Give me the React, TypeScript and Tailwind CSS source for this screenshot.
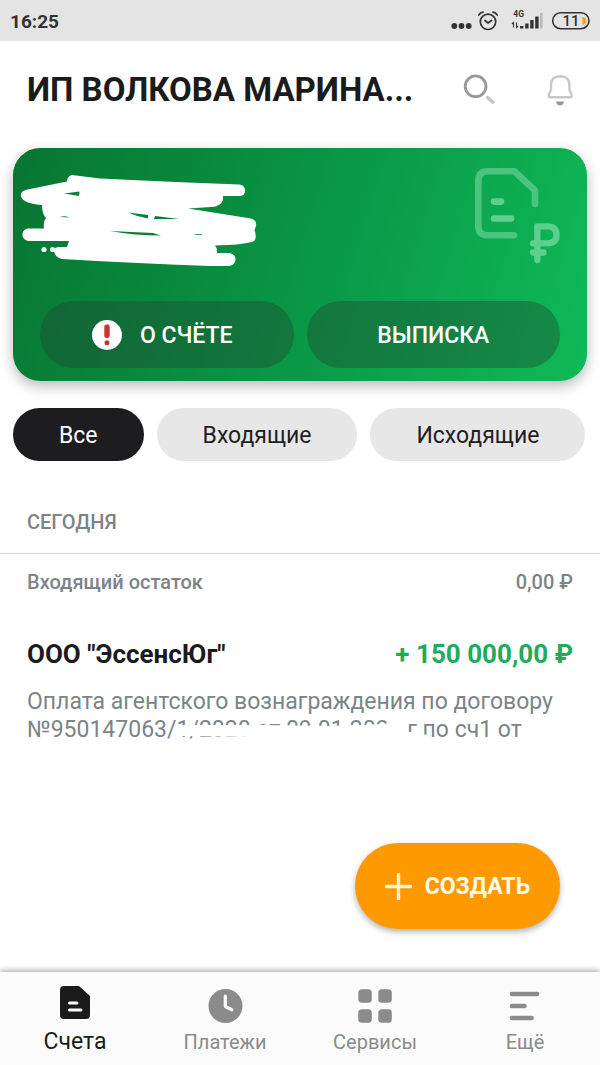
import type { ReactNode } from "react";

function StatusBar() {
  return (
    <div className="flex h-[41px] items-center justify-between bg-[#e4e4e4] px-[10px] text-[#333333]">
      <span className="pt-[2px] text-[19px] leading-6 font-bold">16:25</span>
      <svg className="h-[41px] w-[140px]" viewBox="450 0 140 41" fill="none" aria-hidden="true">
        <g fill="#333">
          <circle cx="454.300" cy="26" r="2.900" />
          <circle cx="461.500" cy="26" r="2.900" />
          <circle cx="468.700" cy="26" r="2.900" />
        </g>
        <g stroke="#333" strokeWidth="1.700" strokeLinecap="round" strokeLinejoin="round">
          <circle cx="488" cy="21.800" r="7.700" />
          <path d="M485 20.500l3 2.500 3.500-2.500M478.800 15q1.500-2.300 4.200-2.800M497.200 15q-1.500-2.300-4.200-2.800" />
        </g>
        <text x="513.300" y="17" fontSize="8.500" fontWeight="700" fill="#333">4G</text>
        <path d="M513.500 27.500v-5l-1.500 1.500M516.500 22.500v5l1.500-1.500" stroke="#333" strokeWidth="1.100" />
        <g fill="#333">
          <rect x="520" y="26" width="3.400" height="2.500" />
          <rect x="525.200" y="23.500" width="3.400" height="5" />
          <rect x="530.200" y="20" width="3.400" height="8.500" />
          <rect x="535.200" y="16.500" width="3.400" height="12" />
        </g>
        <rect x="540" y="13" width="2.600" height="15.500" fill="#bbb" />
        <rect x="552.700" y="12.700" width="36.300" height="16" rx="8" stroke="#333" strokeWidth="1.600" />
        <path d="M582.300 17q4.200 0 4.200 3.900t-4.200 3.900z" fill="#f5a623" />
        <text x="571" y="26" fontSize="15" fontWeight="500" textAnchor="middle" fill="#333">11</text>
      </svg>
    </div>
  );
}

function Header() {
  return (
    <header className="flex h-[107px] items-center pb-[10px] pl-[27px]">
      <h1 className="min-w-0 flex-1 text-[33px] leading-10 font-bold whitespace-nowrap text-[#1b1b1b]">
        ИП ВОЛКОВА МАРИНА...
      </h1>
      <div className="flex gap-10 pr-5">
        <button aria-label="Поиск" className="size-10">
          <svg viewBox="460 67 40 40" fill="none" className="size-10">
            <circle cx="475.600" cy="83.300" r="10.400" stroke="#999" strokeWidth="2.800" />
            <path d="M487.500 94.500l5.500 4.700" stroke="#c2c2c2" strokeWidth="3.200" strokeLinecap="round" />
          </svg>
        </button>
        <button aria-label="Уведомления" className="size-10">
          <svg viewBox="540 69 40 40" fill="none" className="size-10">
            <path d="M551 88v-4.500c0-5 3.300-8.300 9.200-8.300s9.200 3.300 9.200 8.300v4.500c0 2.500 2.300 4 2.300 6.500 0 1.200-.7 1.700-1.700 1.700h-19.600c-1 0-1.700-.5-1.700-1.700 0-2.500 2.300-4 2.300-6.500z" stroke="#c8c8c8" strokeWidth="2.400" />
            <path d="M556 100.500h8q-.5 4-4 4t-4-4z" fill="#999" />
          </svg>
        </button>
      </div>
    </header>
  );
}

function AccountCard() {
  return (
    <section className="mx-[13px] rounded-[27px] bg-[linear-gradient(107deg,#087532_0%,#099444_48%,#0fba58_100%)] px-[27px] pb-[13px] shadow-[0_5px_14px_rgba(0,0,0,0.28)]">
      <div className="flex h-[153px] items-start justify-between">
        <svg className="-ml-5 h-[140px] w-[250px]" viewBox="20 148 250 140" fill="none" aria-hidden="true">
          <path
            fill="#fff"
            d="M72 175L100 178.500Q170 182 239 184.500Q245 185 245 190.500T239 196H223Q224 206 211 207L188 208.500L251 218.500Q257 220 256 226L254.500 230Q258 240 252 242Q240 245 215 245.500L217 249V253H230Q236 255 235.500 260T229 266H210Q130 263 62 259Q54 257 54 250Q55 247 59 247H67L69 241H28Q22 239 22.500 234T28 228.500H44Q43 221 46 218Q42 214 42 205Q30 204 25 201Q20 198 21 193.500Q22 190 30 189L67 181.500Q67 176 72 175Z"
          />
          <path
            fill="#0a7f39"
            d="M64 193.500L79.500 191.500L79 196ZM128 212.500L148 215V218.500Q138 217 128 212.500ZM155 216L179 219H154ZM110 231L153 233L161 235.500Q135 235.500 110 231ZM60 217Q65 215.500 69 217.500ZM194 234.300H202V235H196Z"
          />
          <circle cx="44" cy="249.500" r="2.600" fill="#fff" />
          <circle cx="52.500" cy="249.500" r="2.600" fill="#fff" />
        </svg>
        <svg className="h-[120px] w-[88px]" viewBox="472 148 88 120" fill="none" aria-hidden="true">
          <path d="M514 235.300H488Q478.300 235.300 478.300 226V181Q478.300 171.300 488 171.300H514.500L535 190.500V204" stroke="#4bc57d" strokeWidth="6.600" strokeLinecap="round" strokeLinejoin="round" />
          <path d="M494 201.600h7M494 218.500h17" stroke="#5dd08c" strokeWidth="6.600" strokeLinecap="round" />
          <path d="M537.300 260V226.300H547.500Q556.500 226.300 556.500 234.800T547.500 243.300H533M533 252.500H543.500" stroke="#5dd08c" strokeWidth="6.300" strokeLinecap="round" strokeLinejoin="round" />
        </svg>
      </div>
      <div className="grid grid-cols-2 gap-[13px] text-[23px] font-medium text-white">
        <button className="flex h-[67px] items-center justify-center gap-[18px] rounded-full bg-[#204632]/40 pr-[9px]">
          <svg viewBox="0 0 30 30" className="size-[30px]" aria-hidden="true">
            <circle cx="15" cy="15" r="15" fill="#fff" />
            <rect x="12.300" y="4.500" width="5.400" height="13.500" rx="2.300" fill="#d0312f" />
            <circle cx="15" cy="22.800" r="2.500" fill="#d0312f" />
          </svg>
          <span className="pt-[3px]">О СЧЁТЕ</span>
        </button>
        <button className="h-[67px] rounded-full bg-[#204632]/40 pt-[3px]">ВЫПИСКА</button>
      </div>
    </section>
  );
}

function Filters() {
  return (
    <div className="flex gap-[13px] px-[13px] pt-[27px] text-[23px] text-[#1f1f1f]">
      <button className="h-[53px] rounded-full bg-[#1d1d1f] px-[46px] pt-[3px] text-white">Все</button>
      <button className="h-[53px] rounded-full bg-[#e7e7e7] px-[46px] pt-[3px]">Входящие</button>
      <button className="h-[53px] rounded-full bg-[#e7e7e7] px-[46px] pt-[3px]">Исходящие</button>
    </div>
  );
}

function Operations() {
  return (
    <section className="flex-1 pt-[47px]">
      <h2 className="border-b border-[#d9d9d9] px-[27px] pb-4 text-[20px] leading-[29px] font-medium text-[#7c8488]">
        СЕГОДНЯ
      </h2>
      <div className="flex justify-between px-[27px] pt-[14px] text-[20px] leading-7 font-medium text-[#7c8488]">
        <span>Входящий остаток</span>
        <span>0,00 ₽</span>
      </div>
      <article className="px-[27px] pt-[42px]">
        <div className="flex justify-between text-[26px] leading-8 font-bold">
          <h3 className="text-[#1b1b1b]">ООО "ЭссенсЮг"</h3>
          <span className="text-[#1fab58]">+ 150 000,00 ₽</span>
        </div>
        <div className="relative mt-[18px] text-[23px] leading-7 text-[#7c8488]">
          <p>
            Оплата агентского вознаграждения по договору
            <br />
            №950147063/1/2020 от 09.01.2020 г по сч1 от
          </p>
          <svg className="absolute top-7 left-[150px] h-7 w-[270px]" viewBox="177 714 270 28" fill="none" aria-hidden="true">
            <path
              fill="#fff"
              d="M180 723L262 723L330 724L385 722L392 717L406 717L407 730L420 730L430 735L426 742H300L298 736L262 735L180 734Q176 729 180 723Z"
            />
          </svg>
        </div>
      </article>
    </section>
  );
}

function NavItem({ label, active, children }: { label: string; active?: boolean; children: ReactNode }) {
  return (
    <a
      href="#"
      aria-current={active ? "page" : undefined}
      className={
        active
          ? "flex flex-1 flex-col items-center gap-[5px] pt-[13px] text-[23px] leading-7 text-[#1b1b1b]"
          : "flex flex-1 flex-col items-center gap-[5px] pt-[13px] text-[20px] leading-7 text-[#8b8b8b]"
      }
    >
      <svg viewBox="0 0 38 38" className="size-[38px]" fill="none" aria-hidden="true">
        {children}
      </svg>
      {label}
    </a>
  );
}

function BottomNav() {
  return (
    <nav className="flex h-[93px] bg-[#fbfbfb] shadow-[0_-1px_6px_rgba(0,0,0,0.4)]">
      <NavItem label="Счета" active>
        <path d="M8 1H23L34 11V30Q34 34 30 34H8Q4 34 4 30V5Q4 1 8 1Z" fill="#1b1b1b" />
        <path d="M13.500 18h7.500M13.500 25h11.500" stroke="#fff" strokeWidth="3" strokeLinecap="round" />
      </NavItem>
      <NavItem label="Платежи">
        <circle cx="19.500" cy="21" r="17" fill="#8b8b8b" />
        <path d="M19.300 11v10.500l6.500 3.300" stroke="#fff" strokeWidth="3.200" strokeLinecap="round" strokeLinejoin="round" />
      </NavItem>
      <NavItem label="Сервисы">
        <g fill="#8b8b8b">
          <rect x="2.300" y="4.300" width="13.500" height="13.500" rx="3.500" />
          <rect x="22.300" y="4.300" width="13.500" height="13.500" rx="3.500" />
          <rect x="2.300" y="24.300" width="13.500" height="13.500" rx="3.500" />
          <rect x="22.300" y="24.300" width="13.500" height="13.500" rx="3.500" />
        </g>
      </NavItem>
      <NavItem label="Ещё">
        <path d="M6 9h25M6 21h12.500M6 33h19.500" stroke="#8b8b8b" strokeWidth="4.600" strokeLinecap="round" />
      </NavItem>
    </nav>
  );
}

export default function App() {
  return (
    <div className="flex min-h-screen flex-col bg-white font-[Roboto,'Noto_Sans',sans-serif]">
      <StatusBar />
      <Header />
      <AccountCard />
      <Filters />
      <Operations />
      <div className="sticky bottom-0">
        <button className="absolute right-10 bottom-[136px] flex h-[86px] items-center gap-[13px] rounded-full bg-[#ff9900] px-[30px] text-[23px] font-bold text-[#fffbea] shadow-[0_3px_6px_rgba(0,0,0,0.3)]">
          <svg viewBox="0 0 27 27" className="size-[27px]" aria-hidden="true">
            <path d="M13.500 1.500v24M1.500 13.500h24" stroke="#fff3cf" strokeWidth="3.400" strokeLinecap="round" />
          </svg>
          <span className="pt-[3px]">СОЗДАТЬ</span>
        </button>
        <BottomNav />
      </div>
    </div>
  );
}
